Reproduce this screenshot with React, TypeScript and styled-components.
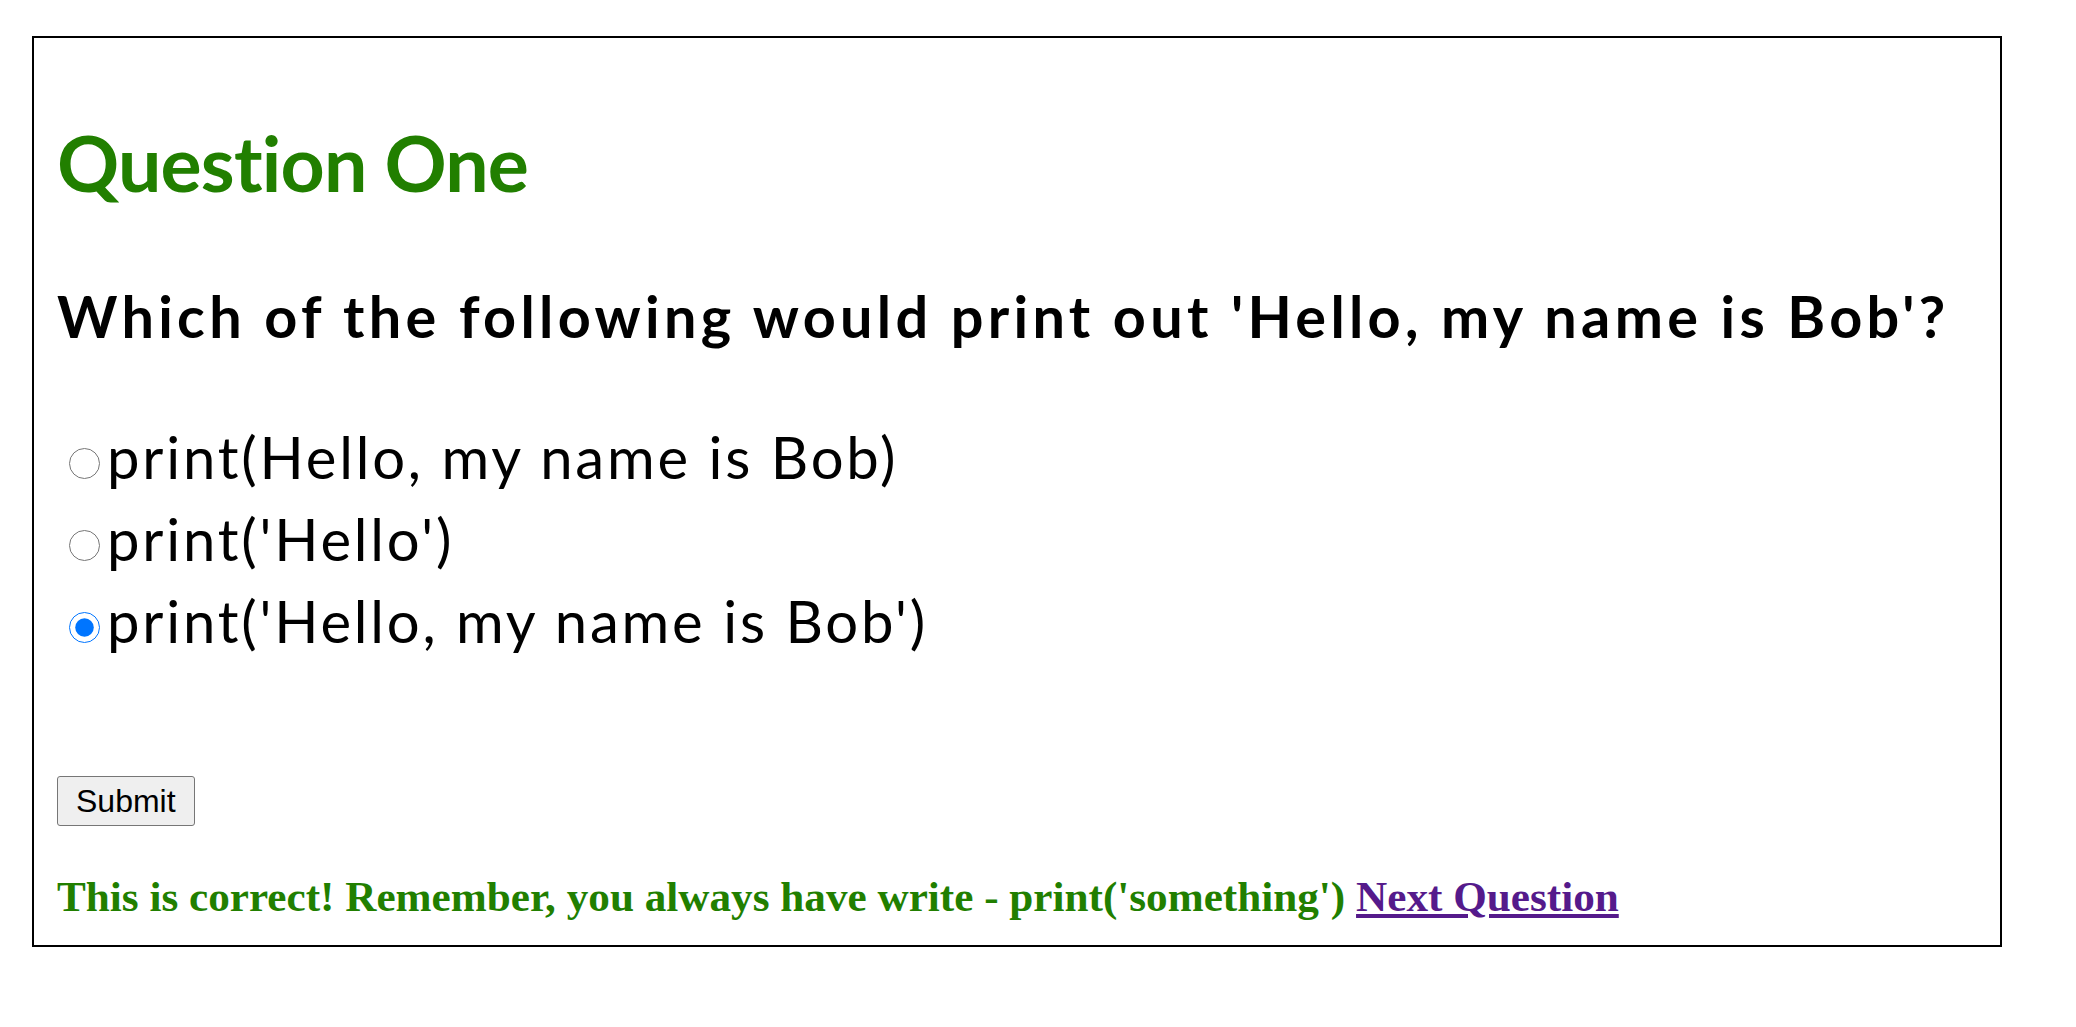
import { useState } from "react";
import styled, { createGlobalStyle } from "styled-components";

const GlobalStyle = createGlobalStyle`
  html, body {
    margin: 0;
    padding: 0;
    background: #ffffff;
  }
`;

const Page = styled.div`
  padding: 36px 0 0 32px;
`;

const Card = styled.div`
  box-sizing: border-box;
  width: 1970px;
  border: 2px solid #000000;
  padding: 74px 23px 18px;
  font-family: "Comic Sans MS", Lato, "DejaVu Sans", sans-serif;
`;

const Title = styled.h1`
  margin: 0;
  font-size: 77px;
  line-height: 100px;
  font-weight: 700;
  letter-spacing: -0.8px;
  color: #217f00;
`;

const Prompt = styled.h2`
  margin: 64px 0 0;
  font-size: 57.6px;
  line-height: 80px;
  font-weight: 700;
  letter-spacing: 4.3px;
  color: #000000;
`;

const Options = styled.div`
  margin-top: 60px;
  display: flex;
  flex-direction: column;
`;

const Option = styled.label`
  display: block;
  font-size: 58px;
  line-height: 82px;
  letter-spacing: 2.8px;
  color: #000000;
  cursor: pointer;
`;

const Radio = styled.input`
  width: 31px;
  height: 31px;
  margin: 0 7px 0 12px;
  vertical-align: baseline;
`;

const SubmitButton = styled.button`
  box-sizing: border-box;
  display: block;
  margin-top: 114px;
  height: 50px;
  padding: 0 18px;
  font-family: "Liberation Sans", Arial, sans-serif;
  font-size: 32px;
  color: #000000;
  background: #efefef;
  border: 1px solid #767676;
  border-radius: 3px;
`;

const Feedback = styled.h3`
  margin: 41px 0 0;
  font-family: "Liberation Serif", "Times New Roman", serif;
  font-size: 43.2px;
  line-height: 60px;
  font-weight: 700;
  color: #217f00;
`;

const NextLink = styled.a`
  color: #551a8b;
  text-decoration: underline;
`;

const choices = [
  "print(Hello, my name is Bob)",
  "print('Hello')",
  "print('Hello, my name is Bob')",
];

export default function App() {
  const [picked, setPicked] = useState(2);

  return (
    <>
      <GlobalStyle />
      <Page>
        <Card>
          <Title>Question One</Title>
          <Prompt>Which of the following would print out 'Hello, my name is Bob'?</Prompt>
          <Options>
            {choices.map((c, i) => (
              <Option key={c}>
                <Radio
                  type="radio"
                  name="q1"
                  checked={picked === i}
                  onChange={() => setPicked(i)}
                />
                {c}
              </Option>
            ))}
          </Options>
          <SubmitButton type="button">Submit</SubmitButton>
          <Feedback>
            This is correct! Remember, you always have write - print('something'){" "}
            <NextLink href="#">Next Question</NextLink>
          </Feedback>
        </Card>
      </Page>
    </>
  );
}
